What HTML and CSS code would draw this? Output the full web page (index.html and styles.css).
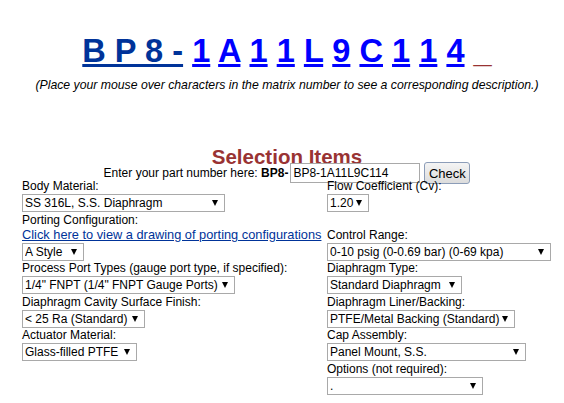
FILE: index.html
```html
<!DOCTYPE html>
<html lang="en">
<head>
    <meta charset="UTF-8">
    <meta name="viewport" content="width=device-width, initial-scale=1.0">
    <title>BP8 Selection</title>
    <link rel="stylesheet" href="styles.css">
</head>
<body>
<div class="page">

	<div class="matrix"><a class="mx base" href="#">B P 8 -</a> <a class="mx" href="#">1</a> <a class="mx" href="#">A</a> <a class="mx" href="#">1</a> <a class="mx" href="#">1</a> <a class="mx" href="#">L</a> <a class="mx" href="#">9</a> <a class="mx" href="#">C</a> <a class="mx" href="#">1</a> <a class="mx" href="#">1</a> <a class="mx" href="#">4</a> <span class="cursor">_</span></div>
	<p class="hint">(Place your mouse over characters in the matrix number to see a corresponding description.)</p>

	<h2 class="title">Selection Items</h2>
	<form class="part" autocomplete="off">
		<label for="partno">Enter your part number here: <b>BP8-</b></label>
		<input id="partno" type="text" value="BP8-1A11L9C114">
		<button type="button">Check</button>
	</form>

	<div class="items">
		<div class="item">
			<label>Body Material:</label>
			<span class="sel"><select class="w203">
				<option>SS 316L, S.S. Diaphragm</option>
				<option>Hastelloy C-22, Hastelloy Diaphragm</option>
			</select></span>
		</div>
		<div class="item">
			<label>Flow Coefficient (Cv):</label>
			<span class="sel"><select class="w42">
				<option>1.20</option>
				<option>0.50</option>
			</select></span>
		</div>

		<div class="item">
			<label>Porting Configuration:</label>
			<a class="drawing" href="#">Click here to view a drawing of porting configurations</a>
			<span class="sel"><select class="w62">
				<option>A Style</option>
				<option>B Style</option>
			</select></span>
		</div>
		<div class="item">
			<label>Control Range:</label>
			<span class="sel"><select class="w224">
				<option>0-10 psig (0-0.69 bar) (0-69 kpa)</option>
				<option>0-25 psig (0-1.7 bar) (0-172 kpa)</option>
			</select></span>
		</div>

		<div class="item">
			<label>Process Port Types (gauge port type, if specified):</label>
			<span class="sel"><select class="w213">
				<option>1/4" FNPT (1/4" FNPT Gauge Ports)</option>
			</select></span>
		</div>
		<div class="item">
			<label>Diaphragm Type:</label>
			<span class="sel"><select class="w135">
				<option>Standard Diaphragm</option>
			</select></span>
		</div>

		<div class="item">
			<label>Diaphragm Cavity Surface Finish:</label>
			<span class="sel"><select class="w123">
				<option>&lt; 25 Ra (Standard)</option>
			</select></span>
		</div>
		<div class="item">
			<label>Diaphragm Liner/Backing:</label>
			<span class="sel"><select class="w188">
				<option>PTFE/Metal Backing (Standard)</option>
			</select></span>
		</div>

		<div class="item">
			<label>Actuator Material:</label>
			<span class="sel"><select class="w115">
				<option>Glass-filled PTFE</option>
			</select></span>
		</div>
		<div class="item">
			<label>Cap Assembly:</label>
			<span class="sel"><select class="w199">
				<option>Panel Mount, S.S.</option>
			</select></span>
		</div>

		<div class="item"></div>
		<div class="item">
			<label>Options (not required):</label>
			<span class="sel"><select class="w156">
				<option>.</option>
			</select></span>
		</div>
	</div>

</div>
</body>
</html>
```

FILE: styles.css
```css
* {
	box-sizing: border-box;
}
body {
	margin: 0;
	background: #ffffff;
	color: #000000;
	font-family: Arial, "Liberation Sans", sans-serif;
	font-size: 12px;
}
.page {
	width: 552px;
	padding-left: 22px;
	padding-top: 33px;
}

/* matrix number */
.matrix {
	text-align: center;
	font-size: 32.6px;
	font-weight: bold;
	line-height: 36px;
	white-space: nowrap;
}
.mx {
	color: #0000ff;
	text-decoration: underline;
}
.mx.base {
	color: #003399;
}
.cursor {
	color: #993333;
}
.hint {
	margin: 9px 0 0 0;
	text-align: center;
	font-style: italic;
	font-size: 12.25px;
	line-height: 15px;
}

/* part number */
.title {
	margin: 54px 0 0 0;
	text-align: center;
	color: #993333;
	font-size: 20.5px;
	line-height: 20px;
}
.part {
	display: flex;
	justify-content: center;
	align-items: center;
	height: 10px;
	margin: 1px 0 0 0;
}
.part label {
	margin-right: 2px;
}
.part input {
	width: 130px;
	height: 20px;
	padding: 0 2px;
	border: 1px solid #a9a9a9;
	font-family: Arial, "Liberation Sans", sans-serif;
	font-size: 12px;
	flex-shrink: 0;
}
.part button {
	width: 46px;
	height: 22px;
	margin-left: 4px;
	padding: 0;
	border: 1px solid #8c9db8;
	border-radius: 3px;
	background: linear-gradient(#f4f4f4, #dcdcdc);
	font-family: Arial, "Liberation Sans", sans-serif;
	font-size: 13px;
	color: #000;
	flex-shrink: 0;
}

/* selection grid */
.items {
	display: grid;
	grid-template-columns: 305px auto;
	align-items: end;
	margin-top: 0.5px;
}
.item {
	padding-top: 0.5px;
}
.item label,
.drawing {
	display: block;
	line-height: 15px;
	height: 15px;
}
.drawing {
	color: #003399;
	font-size: 12.8px;
	line-height: 14px;
	white-space: nowrap;
}
.sel {
	position: relative;
	display: inline-block;
	vertical-align: top;
}
.sel::after {
	content: "";
	position: absolute;
	right: 7px;
	top: 6px;
	border-left: 3.5px solid transparent;
	border-right: 3.5px solid transparent;
	border-top: 6px solid #000;
	pointer-events: none;
}
select {
	-webkit-appearance: none;
	appearance: none;
	display: block;
	height: 18px;
	padding: 0 12px 0 2px;
	border: 1px solid #a9a9a9;
	border-radius: 0;
	background: #fff;
	color: #000;
	font-family: Arial, "Liberation Sans", sans-serif;
	font-size: 12px;
	line-height: 16px;
}
.w42 { width: 42px; }
.w62 { width: 62px; }
.w115 { width: 115px; }
.w123 { width: 123px; }
.w135 { width: 135px; }
.w156 { width: 156px; }
.w188 { width: 188px; }
.w199 { width: 199px; }
.w203 { width: 203px; }
.w213 { width: 213px; }
.w224 { width: 224px; }
```
